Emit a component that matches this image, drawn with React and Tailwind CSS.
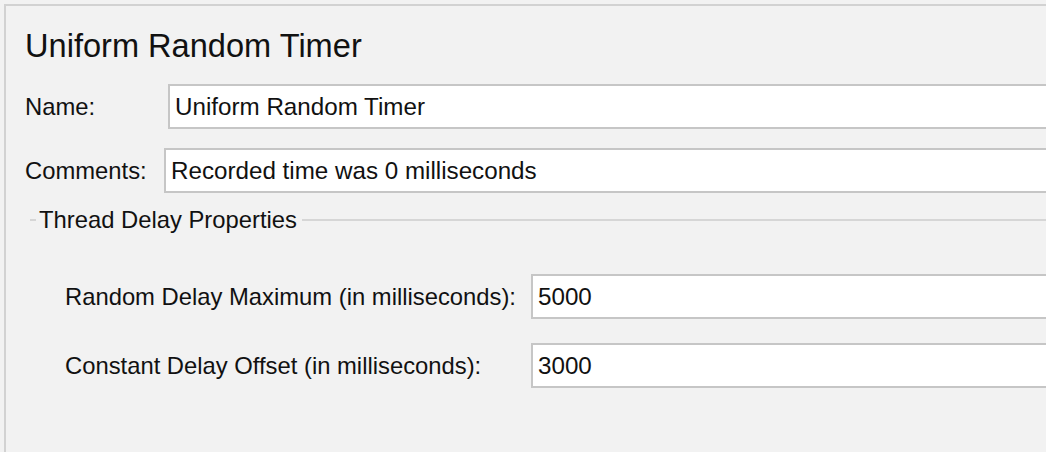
import React from "react";

const fieldCls =
  "flex-1 h-[45px] bg-white border-2 border-r-0 border-[#c6c6c6] pl-[5px] text-[24.2px] leading-[41px] whitespace-nowrap overflow-hidden";

const Row = ({ label, value, labelWidth, className }) => (
  <div className={"flex items-center " + className}>
    <div className="shrink-0 whitespace-nowrap" style={{ width: labelWidth }}>
      {label}
    </div>
    <div className={fieldCls}>{value}</div>
  </div>
);

export default function App() {
  return (
    <div className="h-[452px] w-full overflow-hidden bg-[#f2f2f2] pt-1 font-['Liberation_Sans',Arial,sans-serif] text-[23.8px] text-[#111]">
      <div className="h-full ml-1 border-t-2 border-l-2 border-[#d2d2d2] pl-[19px]">
        <h1 className="mt-[20px] text-[32.6px] leading-[40px] whitespace-nowrap">Uniform Random Timer</h1>

        <Row label="Name:" value="Uniform Random Timer" labelWidth={143} className="mt-[18px]" />
        <Row label="Comments:" value="Recorded time was 0 milliseconds" labelWidth={139} className="mt-[19px]" />

        <div className="mt-[13px] flex items-center h-[27px]">
          <div className="ml-[5px] w-[6px] h-[2px] bg-[#d6d6d6]" />
          <span className="ml-[3px] whitespace-nowrap leading-[27px]">Thread Delay Properties</span>
          <div className="ml-[5px] flex-1 h-[2px] bg-[#d6d6d6]" />
        </div>

        <div className="pl-[40px]">
          <Row
            label="Random Delay Maximum (in milliseconds):"
            value="5000"
            labelWidth={466}
            className="mt-[41px]"
          />
          <Row
            label="Constant Delay Offset (in milliseconds):"
            value="3000"
            labelWidth={466}
            className="mt-[24px]"
          />
        </div>
      </div>
    </div>
  );
}
